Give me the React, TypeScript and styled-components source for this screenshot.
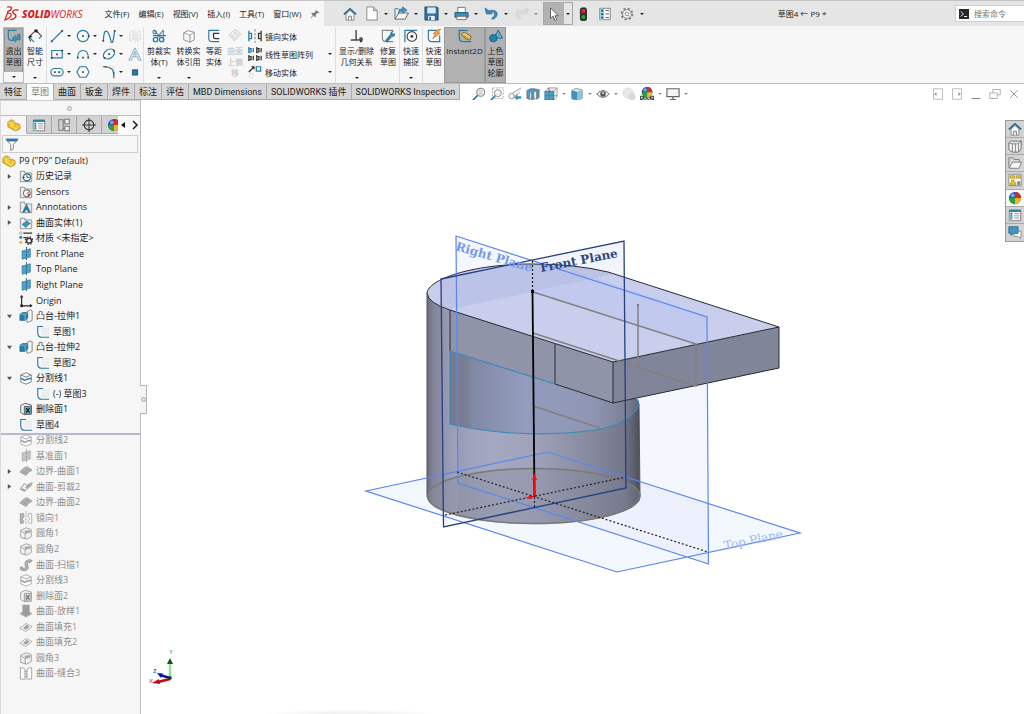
import React from 'react';
import styled, { createGlobalStyle, css } from 'styled-components';

const GlobalStyle = createGlobalStyle`
  *, *::before, *::after { box-sizing: border-box; }
  html, body { margin: 0; padding: 0; }
  body {
    font-family: "Open Sans", "Noto Sans", "Noto Sans CJK SC", sans-serif;
    color: #222;
    background: #fff;
  }
  button, input {
    font: inherit;
    color: inherit;
    border: 0;
    padding: 0;
    margin: 0;
    background: none;
    border-radius: 0;
  }
  ul { list-style: none; margin: 0; padding: 0; }
`;

const blue = '#2b7ca3';
const sky = '#5cb0d4';
const ink = '#3a3a3a';

/* ---------- icons, each drawn on a 16 x 16 grid ---------- */

const cube = (line: string, front: string, top: string) => (
  <>
    <path d="M2 4.5 7 2l7 2v8.5L9 15l-7-2.5z" fill={front} stroke={line} />
    <path d="M2 4.5 9 6.8 14 4 7 2z" fill={top} stroke={line} strokeWidth=".8" />
    <path d="M9 6.8V15" stroke={line} />
  </>
);

const folder = (
  <path d="M1.5 2.5h5v2h8v10h-13z" fill="#ececec" stroke="#8a8a8a" />
);

const split = (line: string, wave: string) => (
  <>
    <path d="M2 4.5 8 2l6 2.5v8L8 15l-6-2.5zM2 4.5 8 7l6-2.5" fill="#fafafa" stroke={line} />
    <path d="M2 9c2-1.5 3 2 5 1.5S11 7.5 14 9" stroke={wave} strokeWidth="1.6" />
  </>
);

const plane = (line: string, fill: string) => (
  <>
    <path d="M3.5 4.5 13 2v9.500L3.500 14z" fill={fill} stroke={line} strokeWidth=".6" />
    <path d="M8.5 0v16" stroke={line} strokeDasharray="3 1" />
  </>
);

const sketch = (
  <>
    <path d="M6 4h9M6 7h9M6 10h9M8 2v10M11 2v10M14 2v10" stroke="#e0e3e8" strokeWidth=".7" />
    <path d="M8 1.7H2v7.300q0 5 5 5h8" stroke={blue} strokeWidth="1.3" />
  </>
);

const fillet = (
  <>
    <path d="M2 5 8 2l6 2v8l-5 3-7-2z" fill="#f2f2f2" stroke="#9b9b9b" />
    <path d="M6 5.5 13 4.500v3L7 9q0-2-1-3.500z" fill="#a9a9a9" />
    <path d="M2 5l5 4v6" stroke="#9b9b9b" />
  </>
);

const patch = (
  <>
    <path d="M1 9q4-5 8-6l6 4q-5 2-7 6z" fill="#b4b4b4" stroke="#9a9a9a" />
    <path d="M4 8l5 3M7 5.5l5 3M10.5 4.500 5 11" stroke="#8d8d8d" strokeWidth=".7" />
  </>
);

const surfaceFill = (
  <>
    <path d="M1 9.5 8 4l7 3.500L8 13z" fill="#fafafa" stroke="#a5a5a5" />
    <path d="M4.5 9 9 5.500l3 2.500-4 3z" fill="#a0a0a0" />
  </>
);

const deleteFace = (line: string, fill: string, cross: string) => (
  <>
    <path d="M2 4 7 1.5l7 2V13l-8 1.500L2 12z" fill="#f6f6f6" stroke={line} />
    <path d="M6 5h8v9H6z" fill={fill} stroke={line} />
    <path d="M8 7l4 5M12 7l-4 5" stroke={cross} strokeWidth="1.6" />
  </>
);

const extrude = (
  <>
    <path d="M9 3l4-2 2 1v11l-4 2H9z" fill="#f4f4f4" stroke="#777" />
    <path d="M1 6l3-2h6v6l-3 3H1z" fill={blue} stroke="#1d5f80" strokeWidth=".7" />
    <path d="M1 6h6v7M7 6l3-2" stroke="#8fd0ea" strokeWidth=".8" />
  </>
);

const sphere = (
  <>
    <circle cx="8" cy="8" r="7" fill="#2656b5" />
    <path d="M8 1a7 7 0 0 1 7 7H8z" fill="#d42a22" />
    <path d="M15 8a7 7 0 0 1-7 7V8z" fill="#f0b52c" />
    <path d="M8 15a7 7 0 0 1-7-7h7z" fill="#2ca13c" />
    <circle cx="5.5" cy="5" r="2.2" fill="#9ec6f5" opacity=".7" />
  </>
);

const home = (
  <>
    <path d="M3.5 8v7h9V8L8 4z" fill="#fff" stroke="#777" />
    <path d="M6.5 15v-4.500h3V15" fill="#fff" stroke="#666" />
    <path d="M1 8.5 8 2l7 6.500" stroke="#1f6a91" strokeWidth="1.8" />
  </>
);

const part = (
  <>
    <path d="M1 4.5 5 2l4 2v3l3-1 3 2v4l-5 3-9-5z" fill="#f0c02c" stroke="#a97d10" strokeWidth=".8" />
    <path d="M1 4.5 5 6.500l4-2.500M5 6.500v3l5 3 5-3.500M5 9.500l4-2.500M10 12v3" stroke="#fbe58a" strokeWidth=".9" />
  </>
);

const listIcon = (
  <>
    <path d="M1.5 2.500h13v12h-13z" fill="#fff" stroke="#777" />
    <path d="M1.5 2h13v2.500h-13z" fill={blue} />
    <path d="M2 5h3.500v9H2z" fill="#a8d3e6" />
    <path d="M3 6.500h1.500M3 9h1.500M3 11.500h1.500" stroke="#1d5f80" strokeWidth="1.4" />
    <path d="M7 6.500h6M7 9h6M7 11.500h6" stroke="#888" />
  </>
);

const icons: Record<string, React.ReactNode> = {
  home,
  part,
  sphere,
  list: listIcon,
  plane: plane('#1e5d7c', '#4fa3c8'),
  planeOff: plane('#9a9a9a', '#c4c4c4'),
  sketch,
  split: split('#777', blue),
  splitOff: split('#aaa', '#999'),
  fillet,
  patch,
  trimSurface: (
    <>
      <path d="M1 10q3-2 5-6l3 2 6-3q0 4-4 6l-5 4z" fill="#ededed" stroke="#999" />
      <path d="M3 10l4 2M8 9l5-4" stroke="#8d8d8d" strokeWidth="1.5" />
    </>
  ),
  surfaceFill,
  deleteFace: deleteFace('#555', sky, '#222'),
  deleteFaceOff: deleteFace('#999', '#d0d0d0', '#7d7d7d'),
  extrude,
  history: (
    <>
      {folder}
      <circle cx="9" cy="9.5" r="4" fill="#fff" stroke="#1f6a91" strokeWidth="1.3" />
      <path d="M9 7v2.500h2.500M3.500 9.500l1.500 1.500 1.500-1.500" stroke={ink} />
    </>
  ),
  sensors: (
    <>
      {folder}
      <circle cx="9" cy="9.5" r="4" fill="#fff" stroke="#555" strokeWidth="1.1" />
      <path d="M9 10l2.500-2.500" stroke="#333" />
      <path d="M10 10h2.500v2.500H10z" fill="#d6302a" />
    </>
  ),
  annotations: (
    <>
      {folder}
      <path d="M4 14 8.500 4.500 13 14h-2.500l-.8-2.500H7.200L6.500 14z" fill={blue} stroke="#1d5f80" strokeWidth=".5" />
    </>
  ),
  solids: (
    <>
      {folder}
      <path d="M3.500 9.500q3-1 5-4l4.500 3q-3 1-5 4.500z" fill="#3e97bf" stroke="#1d5f80" strokeWidth=".7" />
    </>
  ),
  material: (
    <>
      <circle cx="2" cy="2.5" r="1.5" fill="#fff" stroke="#777" strokeWidth=".7" />
      <circle cx="2" cy="7.5" r="1.7" fill={blue} />
      <circle cx="2" cy="13" r="1.7" fill="#efb31f" />
      <path d="M5 2.500h10M5 7.500h4" stroke="#333" strokeWidth="1.5" />
      <circle cx="11.5" cy="11" r="2.8" stroke="#333" strokeWidth="1.6" />
      <circle cx="11.5" cy="11" r="4.3" stroke="#333" strokeWidth="1.3" strokeDasharray="1.7 1.7" />
    </>
  ),
  origin: (
    <>
      <path d="M3 2v11.500h11" stroke="#222" strokeWidth="1.3" />
      <path d="M1 4l2-3 2 3M12.500 11l3 2.500-3 2" fill="#222" />
      <path d="M1.500 12h3v3h-3z" fill="#222" />
    </>
  ),
  mirrorOff: (
    <>
      <path d="M1.500 3h4v4l-2 2 2 3-1 2h-3z" fill="#b8b8b8" stroke="#999" />
      <path d="M14.500 3h-4v4l2 2-2 3 1 2h3z" fill="#fff" stroke="#aaa" />
      <path d="M8 0v16" stroke="#aaa" strokeDasharray="3 1" />
    </>
  ),
  sweep: (
    <path d="M1 11q4-2 3.500 1Q9 12 7 8q-1-6 6-6l2 1-2 2q-5 0-3 3 2 6-4 6.500l-4-1z" fill="#b4b4b4" stroke="#8f8f8f" />
  ),
  loft: <path d="M4 1h8v8l3 2-7 4-7-4 3-2z" fill="#9d9d9d" stroke="#bbb" />,
  knit: (
    <>
      <path d="M1.500 2h3l2.500 2v11H1.500zM14.500 2h-3L9 4v11h5.500z" fill="#fafafa" stroke="#a0a0a0" />
      <path d="M6 6h1.500M6 9h1.500M6 12h1.500M8.500 6H10M8.500 9H10M8.500 12H10" stroke="#999" />
    </>
  ),
  funnel: (
    <>
      <path d="M1 2.500h14l-5.500 6v5l-3 2v-7z" fill="#fff" stroke="#777" />
      <path d="M1 2h14l-1.500 3h-11z" fill={blue} />
    </>
  ),
  config: (
    <>
      <path d="M2 2h5v12H2M7 4h3M7 12h3" stroke="#777" strokeWidth="1.2" />
      <path d="M9 1.500h5v5H9zM9 9.500h5v5H9z" fill="#f4f4f4" stroke="#777" strokeWidth="1.2" />
      <path d="M2 2v12" stroke="#777" />
    </>
  ),
  target: (
    <>
      <circle cx="8" cy="8" r="5.5" stroke="#333" strokeWidth="1.3" />
      <path d="M8 0v16M0 8h16" stroke="#333" strokeWidth="1.1" />
    </>
  ),
  pin: (
    <path d="M9 1l6 5-1.500.8-2-.3L9 9.500l.5 2.500-1.500 1-2.500-2.500L1.500 15 1 14.500 4.500 9.500 2 7.500 3 6l3 .3L9 4z" fill="#777" />
  ),
  page: <path d="M3 1h7l4 4v10H3zM10 1v4h4" fill="#fdfdfd" stroke="#888" />,
  open: (
    <>
      <path d="M1 14V3h4l1.500 1.500H10V7" fill="#e8f1f5" stroke="#666" />
      <path d="M1 14 5 7.500h10.500L12 14z" fill="#f2f2f2" stroke="#666" />
      <path d="M4.500 8Q5 3 9 3V.8L14 4.500 9 7.500V5.500Q6.500 5.500 4.500 8z" fill="#3c93bb" stroke="#1f6a91" strokeWidth=".6" />
    </>
  ),
  save: (
    <>
      <path d="M1 1h13l1 1v13H1z" fill="#2e7399" stroke="#1d4f6c" />
      <path d="M3.500 1.500h9V8h-9z" fill="#dbe8ef" />
      <path d="M4.500 10.500h7V15h-7z" fill="#eee" />
      <path d="M5.500 11.500h2V15h-2z" fill="#2e7399" />
    </>
  ),
  print: (
    <>
      <path d="M4 1.500h8V7H4z" fill="#fff" stroke="#777" />
      <path d="M1 7h14v5H1z" fill="#3b8fb6" stroke="#1d5f80" />
      <path d="M3 11h10v3.500H3z" fill="#f5f5f5" stroke="#777" />
    </>
  ),
  undo: <path d="M1 2l1.500 6.500L9 8.500 7 6.700q4-1 4.300 1.800T8 13l1.500 1.500Q15 11.500 14 7.500T5 4.800z" fill="#3b88b2" stroke="#26668b" strokeWidth=".6" />,
  redo: <path d="M15 2l-1.500 6.500L7 8.500l2-1.800q-4-1-4.300 1.800T8 13l-1.500 1.500Q1 11.500 2 7.500T11 4.800z" fill="#dcdcdc" stroke="#c6c6c6" strokeWidth=".6" />,
  cursor: <path d="M4 1v12l3-2.500 2 5 2-1-2-4.500h4z" fill="#fff" stroke="#555" />,
  traffic: (
    <>
      <rect x="5" y="1" width="7" height="14.5" rx="2" fill="#333" stroke="#222" />
      <circle cx="8.5" cy="4.5" r="2.3" fill="#d9302a" />
      <circle cx="8.5" cy="11.5" r="2.3" fill="#2c9a45" />
    </>
  ),
  options: (
    <>
      <path d="M2 1.500h12v13H2z" fill="#fff" stroke="#777" />
      <path d="M2.500 2H7v12.500H2.500z" fill="#9fcbe0" />
      <path d="M3.500 4h2.500M3.500 8h2.500M3.500 12h2.500" stroke="#1f5f83" strokeWidth="2" />
      <path d="M8.500 4h4M8.500 8h4M8.500 12h4" stroke="#666" strokeWidth="1.3" />
    </>
  ),
  gear: (
    <>
      <circle cx="8" cy="8" r="6.3" stroke="#808080" strokeWidth="2" strokeDasharray="2.5 2.45" />
      <circle cx="8" cy="8" r="5" fill="#f2f2f2" stroke="#808080" />
      <circle cx="8" cy="8" r="2" fill="#fff" stroke="#808080" />
    </>
  ),
  command: (
    <>
      <path d="M0 0h16v16H0z" fill="#262626" />
      <path d="M3 4l4 4-4 4M8 12h5" stroke="#fff" strokeWidth="1.5" />
    </>
  ),
  exitSketch: (
    <>
      <path d="M11 1.500H1.500V9q0 4 4 4H7" stroke={blue} strokeWidth="1.3" />
      <path d="M12 6v3.500h-2V7L5.500 11l4.500 4v-2.500h5V6z" fill="#3f92b8" stroke="#24698c" strokeWidth=".6" />
    </>
  ),
  dimension: (
    <>
      <path d="M1 9 9 1.500M9 1.500l6.500 6.500M1 9l2 5.500" stroke={ink} strokeWidth="1.2" />
      <path d="M15.500 8l-3 3M1 9l6 6" stroke={blue} strokeWidth="1.4" />
      <path d="M7 .5h4v3.500L8.500 4zM0 10l3-3.500 2 3z" fill="#222" />
    </>
  ),
  line: (
    <>
      <path d="M2 14 14 2" stroke={blue} strokeWidth="1.3" />
      <path d="M1 13h2v2H1zM13 1h2v2h-2z" fill="#444" />
    </>
  ),
  circle: (
    <>
      <circle cx="8" cy="8" r="6.5" stroke={blue} strokeWidth="1.3" />
      <path d="M7 7h2v2H7zM13.500 7h2v2h-2z" fill="#444" />
    </>
  ),
  spline: (
    <>
      <path d="M1.500 14Q2 1.500 5 2.500T10 13t4.500-11.500" stroke={blue} strokeWidth="1.4" />
      <path d="M.5 12.500h2v2h-2zM13.500 1h2v2h-2z" fill="#444" />
    </>
  ),
  mirrorGhost: <path d="M2 4l4-2v10l-4 2zM10 4l4-2v10l-4 2zM8 1v14M1 7h14M1 11h14" stroke="#dedede" />,
  rect: (
    <>
      <path d="M2 4h12v8.500H2z" stroke={blue} strokeWidth="1.3" />
      <path d="M1 11.500h2v2H1zM13 3h2v2h-2zM7 7.500h2v2H7z" fill="#444" />
    </>
  ),
  arc: (
    <>
      <path d="M2 12q0-8 6-8t6 8" stroke={blue} strokeWidth="1.3" />
      <path d="M1 11h2v2H1zM13 11h2v2h-2zM7 11h2v2H7z" fill="#444" />
    </>
  ),
  ellipse: (
    <>
      <ellipse cx="8" cy="8" rx="7" ry="5" transform="rotate(-35 8 8)" stroke={blue} strokeWidth="1.3" />
      <path d="M7 7h2v2H7zM12.500 3h2v2h-2zM2 11.500h2v2H2z" fill="#444" />
    </>
  ),
  letter: <path d="M1 15 8 1l7 14h-3l-1.500-4h-5L4 15zM6.300 9h3.400L8 5z" fill="#eaf2f6" stroke="#7ca9bf" />,
  slot: (
    <>
      <rect x="1" y="4" width="14" height="8.5" rx="4.2" stroke={blue} strokeWidth="1.3" />
      <path d="M4.500 7.200h2v2h-2zM9.500 7.200h2v2h-2z" fill="#444" />
    </>
  ),
  polygon: (
    <>
      <path d="M1 8 4.500 2h7L15 8l-3.500 6h-7z" stroke={blue} strokeWidth="1.3" />
      <path d="M7 7h2v2H7z" fill="#444" />
    </>
  ),
  corner: (
    <>
      <path d="M2 2q12 0 11.500 9" stroke={blue} strokeWidth="1.3" />
      <path d="M1 2h5M13.500 8v7" stroke="#555" strokeWidth="1.3" />
      <path d="M7 2h7v6" stroke="#bbb" strokeDasharray="1 1.5" />
    </>
  ),
  point: <path d="M5 5.500h6v6H5z" fill={blue} stroke="#1d4f6c" />,
  trim: (
    <>
      <path d="M2 1l8 9M13 1 6 10M13 1v14" stroke="#6f97ab" strokeWidth="1.5" />
      <circle cx="4" cy="12" r="2.5" stroke={blue} strokeWidth="1.5" />
      <circle cx="11" cy="12" r="2.5" stroke={blue} strokeWidth="1.5" />
      <path d="M1 7.500h15" stroke={blue} strokeWidth="1.3" />
      <circle cx="3" cy="3.5" r="2" stroke={blue} strokeWidth="1.2" />
    </>
  ),
  convert: cube('#8a8a8a', '#f6f6f6', '#fff'),
  offset: (
    <>
      <path d="M14 1.500H2v9q0 4 4 4h8" stroke={blue} strokeWidth="1.3" />
      <path d="M14 5H7.500v4q0 2 2 2H14" stroke="#333" strokeWidth="1.4" />
    </>
  ),
  offsetSurface: (
    <path d="M1 8Q5 1 9 1l6 5q-4 1-5 5l-3 3-1-3zM4 7l5 4M7 4l5 3" fill="#efefef" stroke="#cbcbcb" />
  ),
  mirror: (
    <>
      <path d="M1 2v12M1 5h3v6H1" stroke={blue} strokeWidth="1.5" />
      <path d="M15 2v12M15 5h-3v6h3" stroke={ink} strokeWidth="1.5" />
      <path d="M8 0v16" stroke="#777" strokeDasharray="3 1.5" />
    </>
  ),
  pattern: (
    <>
      <path d="M1 0v7M1 2h2.500v3.500H1M6 1v5" stroke={blue} strokeWidth="1.5" />
      <path d="M10 0v7M10 2h2.500v3.500H10M15 1v5M1 9v7M1 11h2.500v3.500H1M6 10v5M10 9v7M10 11h2.500v3.500H10M15 10v5" stroke={ink} strokeWidth="1.5" />
    </>
  ),
  move: (
    <>
      <path d="M9.500 2h5v5h-5z" stroke={blue} strokeWidth="1.4" />
      <path d="M1.500 10h4.500v4.500H1.500z" stroke="#ddd" />
      <path d="M1 8 6 3" stroke="#222" strokeWidth="1.4" />
      <path d="M3.500 1.500h4v4z" fill="#222" />
    </>
  ),
  relations: (
    <>
      <path d="M7 1v11M1 12.500h9" stroke="#444" strokeWidth="1.6" />
      <path d="M10 11.500h5L13.500 15h-2z" fill="#333" />
      <circle cx="12.5" cy="11" r="2" fill="#555" />
    </>
  ),
  repair: (
    <>
      <path d="M14 1.500H1.500V10q0 4.500 4.500 4.500h8" stroke="#888" strokeWidth="1.3" />
      <path d="M5 13 11 6q-.5-3 3-3.500l-1.500 2L14 6l2-1q0 4-3.500 3.500L7 15z" fill="#2f86b0" stroke="#1d5f80" strokeWidth=".6" />
    </>
  ),
  snap: (
    <>
      <path d="M1 1v14M1 1.500h14" stroke={blue} strokeWidth="1.4" />
      <circle cx="9" cy="8.5" r="5.5" stroke="#444" strokeWidth="1.3" />
      <circle cx="9" cy="8.5" r="1.6" fill="#333" />
    </>
  ),
  rapid: (
    <>
      <path d="M11 1.500H1.500V10q0 4.500 4.500 4.500h8.500V7" stroke={blue} strokeWidth="1.3" />
      <path d="M13 0 7 5.500h3L6.500 11 15 4.500h-3L16 0z" fill="#f4b429" stroke="#c5531b" strokeWidth=".7" />
    </>
  ),
  instant: (
    <>
      <path d="M11 1.500H1.500V10q0 4.500 4.500 4.500H15" stroke={blue} strokeWidth="1.5" />
      <path d="M4 5.500 7 3.500l8 5-1 4-4-.5-5-4z" fill="#f2cf45" stroke="#555" strokeWidth=".9" />
      <path d="M6 7.500l6 3.500" stroke="#777" />
    </>
  ),
  shaded: (
    <>
      <path d="M10.500 1l5 9.500h-10z" fill="#5fa9c9" stroke="#22658a" />
      <circle cx="5" cy="10.5" r="4.3" fill="#2e7fa8" stroke="#1d5f80" />
    </>
  ),
  zoomFit: (
    <>
      <circle cx="10" cy="6" r="4.5" fill="#e8f2f7" stroke="#888" strokeWidth="1.2" />
      <path d="M6.500 9.500 1 15" stroke={blue} strokeWidth="2" />
      <path d="M8 4.500h4M8 7.500h4" stroke="#aaa" />
    </>
  ),
  zoomArea: (
    <>
      <path d="M3 1h12v12H3z" stroke="#999" strokeDasharray="2 1.5" />
      <circle cx="9" cy="7" r="4" fill="#eef5f8" stroke="#888" />
      <path d="M6 10 1 15" stroke={blue} strokeWidth="2" />
    </>
  ),
  previous: (
    <>
      <path d="M15 1 3 8l2 4 8-5" fill="#eee" stroke="#999" />
      <circle cx="4" cy="10.5" r="3" fill="#fff" stroke="#888" />
      <path d="M7 12l4-3.500v2h4v3h-4v2z" fill="#3f92b8" />
    </>
  ),
  section: (
    <>
      <path d="M1 4l4-2h4l6 1v9l-3 2V5H9v9H5V6l-1 8-3-1z" fill="#4b9cc1" stroke="#666" strokeWidth=".8" />
      <path d="M9 5h3v8l-3 1zM4 6h2v8H4z" fill="#f4f4f4" stroke="#777" strokeWidth=".8" />
    </>
  ),
  orient: (
    <>
      <path d="M5 1h10v10l-4 4V5H5z" fill="#eee" stroke="#888" strokeWidth=".8" />
      <path d="M1 5h10v10H1z" fill="#4ba0c6" stroke="#24698c" strokeWidth=".8" />
      <path d="M1 5l4-4M11 5l4-4M6 1v14M1 10h14" stroke="#6b6b6b" strokeWidth=".7" />
    </>
  ),
  display: (
    <>
      <path d="M2 4 7 1.500l7 2V13l-5 2.500-7-2z" fill="#dfeaf0" stroke="#777" strokeWidth=".8" />
      <path d="M2 4l6 1.500v9.500l-6-1.500z" fill="#3f92b8" />
      <path d="M8 5.500 14 3.500V13l-6 2z" fill="#8cc3dc" />
    </>
  ),
  eye: (
    <>
      <path d="M1 8q7-8 14 0-7 8-14 0z" fill="#fafafa" stroke="#777" strokeWidth="1.2" />
      <circle cx="8" cy="8" r="3.2" fill="#555" />
      <circle cx="8" cy="7" r="1" fill="#fff" />
    </>
  ),
  appearance: (
    <>
      <circle cx="7" cy="7" r="6" fill="#e8e8e8" stroke="#ddd" />
      <circle cx="11.5" cy="11" r="3.5" fill="#dadada" stroke="#d0d0d0" />
    </>
  ),
  scene: (
    <>
      <path d="M0 10h16v6H0z" fill="#444" />
      <path d="M1 11h2v2H1zM5 12h2v2H5zM9 12h2v2H9zM13 11h2v2h-2zM3 14h2v1.500H3zM7 14h2v1.500H7zM11 14h2v1.500h-2z" fill="#ddd" />
      <g transform="translate(1 -1) scale(.88)">{sphere}</g>
    </>
  ),
  monitor: (
    <>
      <path d="M1 2h14v9H1z" fill="#f0f5f7" stroke="#666" strokeWidth="1.3" />
      <path d="M8 11v3M4.500 14.500h7" stroke="#666" strokeWidth="1.4" />
    </>
  ),
  dockLeft: (
    <>
      <path d="M2 1h12v14H2z" fill="#fff" stroke="#aaa" />
      <path d="M6 5.500v5L3 8z" fill="#888" />
    </>
  ),
  dockRight: (
    <>
      <path d="M2 1h12v14H2z" fill="#fff" stroke="#aaa" />
      <path d="M10 5.500v5L13 8z" fill="#888" />
    </>
  ),
  minimize: <path d="M2 14h12" stroke="#888" strokeWidth="1.5" />,
  restore: (
    <>
      <path d="M5 6V2h10v7h-4" stroke="#999" />
      <path d="M1 6.500h10v7.500H1z" fill="#fff" stroke="#999" />
    </>
  ),
  close: <path d="M3 3l10 10M13 3 3 13" stroke="#888" strokeWidth="1.2" />,
  library: (
    <>
      <path d="M1 4.500 4 2l3 1 2-1 3 1 3-1v9l-3 4H5l-4-3z" fill="#f0f0f0" stroke="#666" />
      <path d="M5 5v10M8.500 5v10M12 5v10M1 4.500l4 1h7l3-3" stroke="#777" strokeWidth=".9" />
    </>
  ),
  explorer: (
    <>
      <path d="M1 13.500V2h4.500L7 4h6v3" fill="#d9d9d9" stroke="#777" />
      <path d="M1.500 14 5 7h10.500l-3 7z" fill="#f7f7f7" stroke="#777" />
    </>
  ),
  palette: (
    <>
      <path d="M1 1.500h14v13H1z" fill="#fff" stroke="#888" />
      <path d="M2.500 3h5.500v3H2.500zM9.500 3H14v3H9.500zM4 8h3v3h2v3H2.500v-3H4z" fill="#edc52a" stroke="#8e7411" strokeWidth=".6" />
      <path d="M10.500 9.500H14V14h-3.500z" fill="#888" />
    </>
  ),
  forum: (
    <>
      <path d="M7 7h8v6h-1v2.500L11.500 13H7z" fill="#fff" stroke="#888" />
      <path d="M1 2h10.500v7.500H6L3.500 12V9.500H1z" fill="#4498bf" stroke="#24698c" />
    </>
  ),
};

const Glyph = styled.svg<{ $size: number }>`
  display: block;
  flex: none;
  width: ${(p) => p.$size}px;
  height: ${(p) => p.$size}px;
`;

const Icon = ({ name, size = 14 }: { name: string; size?: number }) => (
  <Glyph $size={size} viewBox="0 0 16 16" fill="none" aria-hidden="true">
    {icons[name]}
  </Glyph>
);

const Caret = styled.span<{ $soft?: boolean }>`
  display: block;
  flex: none;
  border: 2px solid transparent;
  border-top-color: ${(p) => (p.$soft ? '#8f8f8f' : '#222')};
  border-bottom-width: 0;
`;

/* ---------- title bar ---------- */

const Window = styled.div`
  display: flex;
  flex-direction: column;
  min-height: 100vh;
  font-size: 9px;
  line-height: 12px;
`;

const TitleBar = styled.header`
  display: flex;
  height: 26px;
  background: #e5e5e5;
  border-top: 1px solid #c4c4c4;
  font-size: 8px;
`;

const Brand = styled.div`
  display: flex;
  align-items: center;
  width: 324px;
  padding-left: 4px;
  background: #f7f7f7;
`;

const Logo = styled.svg`
  width: 15px;
  height: 16px;
  margin-right: 3px;
`;

const Wordmark = styled.span<{ $bold?: boolean }>`
  font-size: 10px;
  font-style: italic;
  font-weight: ${(p) => (p.$bold ? 800 : 400)};
  color: #d8261c;
`;

const MenuBar = styled.nav`
  display: flex;
  align-items: center;
  gap: 9px;
  margin: 0 9px 0 22px;
`;

const MenuButton = styled.button`
  white-space: nowrap;
`;

const QuickBar = styled.div`
  display: flex;
  align-items: center;
  padding-left: 18px;
`;

const ToolButton = styled.button`
  display: flex;
  align-items: center;
  justify-content: center;
  flex: none;
  width: 16px;
  height: 16px;
`;

const DropButton = styled.button<{ $width: number }>`
  display: flex;
  align-items: center;
  justify-content: center;
  flex: none;
  width: ${(p) => p.$width}px;
  height: 16px;
`;

const QuickHome = styled(ToolButton)`
  margin-right: 5px;
`;

const SelectTool = styled.div`
  display: flex;
  align-items: center;
  height: 23px;
  margin-right: 2px;
  border: 1px solid #a8a8a8;
`;

const SelectButton = styled(ToolButton)`
  width: 20px;
  height: 21px;
  background: #b2b2b2;
`;

const QuickGroup = styled.div`
  display: flex;
  align-items: center;
  gap: 6px;
`;

const DocumentTitle = styled.div`
  display: flex;
  align-items: center;
  justify-content: center;
  flex: 1;
  white-space: nowrap;
  color: #222;
`;

const SearchBox = styled.label`
  display: flex;
  align-items: center;
  align-self: center;
  gap: 5px;
  width: 69px;
  height: 17px;
  padding-left: 3px;
  background: #fff;
  border: 1px solid #cfcfcf;
  border-right: 0;
`;

const SearchInput = styled.input`
  flex: 1;
  min-width: 0;
  outline: none;
  &::placeholder { color: #777; opacity: 1; }
`;

/* ---------- ribbon ---------- */

const Ribbon = styled.div`
  display: flex;
  height: 58px;
  padding: 1px 0 0 3px;
  background: #f7f7f7;
  border-bottom: 1px solid #bdbdbd;
  font-size: 8px;
  line-height: 11px;
`;

const RibbonButton = styled.button<{ $width: number; $active?: boolean; $disabled?: boolean; $rule?: boolean }>`
  display: flex;
  flex-direction: column;
  align-items: center;
  flex: none;
  width: ${(p) => p.$width}px;
  padding-top: 2px;
  white-space: pre;
  color: ${(p) => (p.$disabled ? '#bcbcbc' : '#222')};
  ${(p) => p.$active && css`background: #b1b1b1; box-shadow: inset 0 0 0 1px #999;`}
  ${(p) => p.$rule && css`border-right: 1px solid #dedede;`}
`;

const RibbonLabel = styled.span`
  margin-top: 2px;
`;

const RibbonDrop = styled.span`
  display: flex;
  align-items: center;
  justify-content: center;
  width: 100%;
  height: 10px;
  margin-top: auto;
`;

const ExitSketch = styled(RibbonButton)`
  border: 1px solid #bdbdbd;
  padding-top: 1px;
  ${RibbonDrop} { background: #f7f7f7; }
`;

const SketchGrid = styled.div`
  display: grid;
  grid-template-columns: repeat(3, 26px) 16px;
  grid-template-rows: repeat(3, 18px);
  padding-left: 2px;
  border-right: 1px solid #dedede;
`;

const SketchCell = styled.div`
  display: flex;
  align-items: center;
`;

const CommandStack = styled.div`
  display: grid;
  grid-template-rows: repeat(3, 18px);
  width: 91px;
  padding-right: 3px;
  border-right: 1px solid #dedede;
`;

const StackRow = styled.button`
  display: flex;
  align-items: center;
  gap: 3px;
  padding-left: 3px;
  text-align: left;
  white-space: nowrap;
  ${Caret} { margin-left: auto; }
`;

/* ---------- tabs and view toolbar ---------- */

const TabRow = styled.div`
  display: flex;
  height: 16px;
  background: #fff;
`;

const CommandTabs = styled.div`
  display: flex;
  font-family: Roboto, "Noto Sans CJK SC", sans-serif;
`;

const CommandTab = styled.button<{ $active?: boolean; $wide?: boolean }>`
  min-width: 27px;
  padding: 0 ${(p) => (p.$wide ? 4 : 0)}px;
  white-space: nowrap;
  background: #d5d5d5;
  border-right: 1px solid #aaa;
  border-bottom: 1px solid #aaa;
  ${(p) => p.$active && css`background: #fbfbfb; color: #7b7b7b; border-bottom-color: #fbfbfb;`}
`;

const ViewBar = styled.div`
  display: flex;
  align-items: center;
  padding: 4px 0 0 11px;
  gap: 2px;
`;

const WindowBar = styled.div`
  display: flex;
  align-items: center;
  gap: 3px;
  margin-left: auto;
  padding: 4px 2px 0 0;
`;

/* ---------- feature manager ---------- */

const Workspace = styled.main`
  display: flex;
  flex: 1;
`;

const Sidebar = styled.aside`
  position: relative;
  z-index: 1;
  display: flex;
  flex-direction: column;
  flex: none;
  width: 141px;
  background: #f6f6f6;
  border-right: 1px solid #bdbdbd;
  border-left: 1px solid #dcdcdc;
`;

const GripBar = styled.div`
  display: flex;
  align-items: center;
  justify-content: center;
  height: 16px;
  padding-right: 3px;
  border-top: 1px solid #d0d0d0;
  border-bottom: 1px solid #bdbdbd;
`;

const Knob = styled.span`
  width: 5px;
  height: 5px;
  border: 1px solid #aaa;
  border-radius: 50%;
  background: #e8e8e8;
`;

const PanelTabs = styled.div`
  display: flex;
  height: 18px;
  margin: 0 0 1px 1px;
`;

const PanelTab = styled.button<{ $active?: boolean; $cut?: boolean }>`
  display: flex;
  align-items: center;
  justify-content: center;
  width: 25px;
  background: ${(p) => (p.$active ? '#f6f6f6' : '#d2d2d2')};
  border-right: 1px solid #a9a9a9;
  border-bottom: 1px solid ${(p) => (p.$active ? '#f6f6f6' : '#a9a9a9')};
  ${(p) => p.$cut && css`
    justify-content: flex-start;
    width: 16px;
    padding-left: 5px;
    border-right: 0;
    overflow: hidden;
  `}
`;

const PanelArrow = styled.button<{ $grow?: boolean }>`
  display: flex;
  align-items: center;
  justify-content: ${(p) => (p.$grow ? 'flex-end' : 'center')};
  ${(p) => (p.$grow ? css`flex: 1;` : css`width: 10px; background: #fbfbfb;`)}
`;

const ArrowGlyph = styled.svg<{ $size: number }>`
  display: block;
  width: ${(p) => p.$size}px;
  height: ${(p) => p.$size}px;
`;

const FilterBox = styled.label`
  display: flex;
  align-items: center;
  height: 18px;
  margin: 0 2px 0 1px;
  padding-left: 2px;
  border: 1px solid #cdcdcd;
`;

const FilterInput = styled.input`
  flex: 1;
  min-width: 0;
  outline: none;
`;

const Tree = styled.ul`
  display: grid;
  grid-auto-rows: 1fr;
  min-height: 528px;
`;

const TreeRow = styled.li<{ $level: number; $off?: boolean; $bar?: boolean }>`
  display: flex;
  align-items: center;
  gap: 3px;
  padding-left: ${(p) => [1, 2, 35][p.$level]}px;
  white-space: nowrap;
  color: ${(p) => (p.$off ? '#8d8d8d' : '#222')};
  ${(p) => p.$bar && css`box-shadow: 0 2px 0 #b6b6d6;`}
`;

const Twisty = styled.button`
  display: flex;
  align-items: center;
  justify-content: center;
  width: 13px;
  height: 12px;
`;

const Handle = styled.button`
  position: absolute;
  top: 285px;
  right: -7px;
  display: flex;
  align-items: center;
  justify-content: center;
  width: 7px;
  height: 29px;
  background: #f4f4f4;
  border: 1px solid #b5b5b5;
  border-left: 0;
`;

/* ---------- graphics area ---------- */

const Viewport = styled.section`
  position: relative;
  flex: 1;
  min-width: 0;
  background: #fff;
`;

const Scene = styled.svg`
  display: block;
  width: 100%;
  height: auto;
`;

const PlaneName = styled.text<{ $light?: boolean }>`
  font-family: "DejaVu Serif", serif;
  font-size: 12px;
  font-weight: ${(p) => (p.$light ? 400 : 700)};
`;

const AxisName = styled.text`
  font-family: "Liberation Sans", sans-serif;
  font-size: 6px;
  font-weight: 700;
`;

const TaskPane = styled.nav`
  position: absolute;
  top: 20px;
  right: 0;
  display: grid;
  grid-auto-rows: 1fr;
  width: 19px;
  min-height: 122px;
  background: #d3d3d3;
  border: 1px solid #999;
  border-right: 0;
`;

const TaskButton = styled.button<{ $active?: boolean }>`
  display: flex;
  align-items: center;
  justify-content: center;
  background: ${(p) => (p.$active ? '#f8f8f8' : '#d3d3d3')};
  border-bottom: 1px solid #aaa;
  &:last-child { border-bottom: 0; }
`;

/* ---------- data ---------- */

const menus = ['文件(F)', '编辑(E)', '视图(V)', '插入(I)', '工具(T)', '窗口(W)'];

const quickTools = [
  ['page', '新建'],
  ['open', '打开'],
  ['save', '保存'],
  ['print', '打印'],
  ['undo', '撤销'],
  ['redo', '重做'],
];

const sketchTools: [string, boolean][] = [
  ['line', true], ['circle', true], ['spline', true], ['mirrorGhost', false],
  ['rect', true], ['arc', true], ['ellipse', true], ['letter', false],
  ['slot', true], ['polygon', false], ['corner', true], ['point', false],
];

type Command = { icon: string; label: string; width: number; drop?: boolean; active?: boolean; disabled?: boolean; rule?: boolean };

const editCommands: Command[] = [
  { icon: 'trim', label: '剪裁实\n体(T)', width: 30, drop: true },
  { icon: 'convert', label: '转换实\n体引用', width: 29, drop: true },
  { icon: 'offset', label: '等距\n实体', width: 22 },
  { icon: 'offsetSurface', label: '曲面\n上偏\n移', width: 20, disabled: true },
];

const viewCommands: Command[] = [
  { icon: 'relations', label: '显示/删除\n几何关系', width: 41, drop: true },
  { icon: 'repair', label: '修复\n草图', width: 23, rule: true },
  { icon: 'snap', label: '快速\n捕捉', width: 23, drop: true, rule: true },
  { icon: 'rapid', label: '快速\n草图', width: 21 },
  { icon: 'instant', label: 'Instant2D', width: 41, active: true },
  { icon: 'shaded', label: '上色\n草图\n轮廓', width: 21, active: true },
];

const tabs = ['特征', '草图', '曲面', '钣金', '焊件', '标注', '评估', 'MBD Dimensions', 'SOLIDWORKS 插件', 'SOLIDWORKS Inspection'];

const viewTools: [string, boolean][] = [
  ['zoomFit', false], ['zoomArea', false], ['previous', false], ['section', false],
  ['orient', true], ['display', true], ['eye', true], ['appearance', false],
  ['scene', true], ['monitor', true],
];

type Node = { icon: string; text: string; level?: number; fold?: 'open' | 'shut'; off?: boolean; bar?: boolean };

const nodes: Node[] = [
  { icon: 'part', text: 'P9 ("P9" Default)', level: 0 },
  { icon: 'history', text: '历史记录', fold: 'shut' },
  { icon: 'sensors', text: 'Sensors' },
  { icon: 'annotations', text: 'Annotations', fold: 'shut' },
  { icon: 'solids', text: '曲面实体(1)', fold: 'shut' },
  { icon: 'material', text: '材质 <未指定>' },
  { icon: 'plane', text: 'Front Plane' },
  { icon: 'plane', text: 'Top Plane' },
  { icon: 'plane', text: 'Right Plane' },
  { icon: 'origin', text: 'Origin' },
  { icon: 'extrude', text: '凸台-拉伸1', fold: 'open' },
  { icon: 'sketch', text: '草图1', level: 2 },
  { icon: 'extrude', text: '凸台-拉伸2', fold: 'open' },
  { icon: 'sketch', text: '草图2', level: 2 },
  { icon: 'split', text: '分割线1', fold: 'open' },
  { icon: 'sketch', text: '(-) 草图3', level: 2 },
  { icon: 'deleteFace', text: '删除面1' },
  { icon: 'sketch', text: '草图4', bar: true },
  { icon: 'splitOff', text: '分割线2', off: true },
  { icon: 'planeOff', text: '基准面1', off: true },
  { icon: 'patch', text: '边界-曲面1', off: true, fold: 'shut' },
  { icon: 'trimSurface', text: '曲面-剪裁2', off: true, fold: 'shut' },
  { icon: 'patch', text: '边界-曲面2', off: true },
  { icon: 'mirrorOff', text: '镜向1', off: true },
  { icon: 'fillet', text: '圆角1', off: true },
  { icon: 'fillet', text: '圆角2', off: true },
  { icon: 'sweep', text: '曲面-扫描1', off: true },
  { icon: 'splitOff', text: '分割线3', off: true },
  { icon: 'deleteFaceOff', text: '删除面2', off: true },
  { icon: 'loft', text: '曲面-放样1', off: true },
  { icon: 'surfaceFill', text: '曲面填充1', off: true },
  { icon: 'surfaceFill', text: '曲面填充2', off: true },
  { icon: 'fillet', text: '圆角3', off: true },
  { icon: 'knit', text: '曲面-缝合3', off: true },
];

const CommandButton = ({ icon, label, width, drop, active, disabled, rule }: Command) => (
  <RibbonButton $width={width} $active={active} $disabled={disabled} $rule={rule} disabled={disabled}>
    <Icon name={icon} />
    <RibbonLabel>{label}</RibbonLabel>
    {drop && <RibbonDrop><Caret /></RibbonDrop>}
  </RibbonButton>
);

/* ---------- 3D model ---------- */

const topFace = 'M427 293C428 280 470 264 533 264Q575 264 608 272L779 327 613 362 450 310Q428 303 427 293z';

const Model = () => (
  <Scene viewBox="141 100 883 614" role="img" aria-label="P9">
    <defs>
      <linearGradient id="wall" gradientUnits="userSpaceOnUse" x1="427" x2="641" y1="0" y2="0">
        <stop offset="0" stopColor="#696b73" />
        <stop offset=".03" stopColor="#83869a" />
        <stop offset=".12" stopColor="#979bb2" />
        <stop offset=".3" stopColor="#a4a8c1" />
        <stop offset=".5" stopColor="#9fa2b9" />
        <stop offset=".75" stopColor="#878ba0" />
        <stop offset=".92" stopColor="#74778a" />
        <stop offset=".98" stopColor="#555864" />
        <stop offset="1" stopColor="#484a52" />
      </linearGradient>
      <linearGradient id="recess" gradientUnits="userSpaceOnUse" x1="450" x2="640" y1="0" y2="0">
        <stop offset="0" stopColor="#74788d" />
        <stop offset=".1" stopColor="#7c8096" />
        <stop offset=".11" stopColor="#8088a4" />
        <stop offset=".4" stopColor="#939cbd" />
        <stop offset=".75" stopColor="#8f96b4" />
        <stop offset=".92" stopColor="#7c8197" />
        <stop offset="1" stopColor="#5f6373" />
      </linearGradient>
      <linearGradient id="base" gradientUnits="userSpaceOnUse" x1="428" x2="640" y1="0" y2="0">
        <stop offset="0" stopColor="#888a98" />
        <stop offset=".45" stopColor="#9194a6" />
        <stop offset="1" stopColor="#787b8c" />
      </linearGradient>
      <radialGradient id="dockShade">
        <stop offset="0" stopColor="#e6e6e6" />
        <stop offset=".4" stopColor="#f3f3f3" />
        <stop offset="1" stopColor="#fff" />
      </radialGradient>
      <clipPath id="topFace">
        <path d={topFace} />
      </clipPath>
    </defs>

    <path d="M456 236 707 317 708 564 458 483z" fill="#f4f7fe" />
    <path d="M366 491 548 452 800 533 617 572z" fill="#f3f7fe" />
    <path d="M458 472 548 452 708 504V564L458 483z" fill="#ecf1fd" />
    <path d="M441 279 624 241 626 300 443 527z" fill="#f1f4fa" />

    <path d="M427 293V497A106 27 0 0 0 640 497L639 404 613 380 450 300z" fill="url(#wall)" />
    <ellipse cx="534" cy="496" rx="106" ry="27" fill="url(#base)" opacity=".5" />
    <path d="M443 300V517L458 514V305z" fill="#b9bfe0" opacity=".1" />
    <path d="M450 351 613 400 635 396Q639 400 639 405Q630 425 595 430 520 440 450 424z" fill="url(#recess)" />
    <path d="M427 293V497M639 404 640 497" stroke="#55565c" />
    <ellipse cx="534" cy="496" rx="106" ry="27.5" fill="none" stroke="#7b7876" strokeWidth="1.5" />

    <path d={topFace} fill="#c9ceed" />
    <g clipPath="url(#topFace)">
      <path d="M533 255 707 317V343L696 344 533 292z" fill="#bfc8ef" opacity=".8" />
      <path d="M441 279 624 241V272L440 311z" fill="#b5bde0" opacity=".6" />
      <path d="M456 236 533 261V292L458 308z" fill="#b9c4ef" opacity=".35" />
    </g>
    <path d="M450 310 613 362V403L450 351z" fill="#9094a9" />
    <path d="M613 362 779 327V368L613 403z" fill="#818599" />
    <path d="M427 293C428 280 470 264 533 264Q575 264 608 272L779 327V368L613 403 555 384V344M427 293Q428 303 450 310L613 362 779 327M613 362V403M450 310V351" fill="none" stroke="#2a2a30" />
    <path d="M555 384 450 351V424Q520 440 595 430 630 425 639 405 639 401 636 398" fill="none" stroke="#3b88b5" strokeWidth="1.2" />

    <path d="M533 292 696 344V386L533 333M638 305V366M533 406 600 428" fill="none" stroke="#82807f" strokeWidth="1.5" />
    <path d="M637 304h2v2h-2z" fill="#777" />

    <path d="M456 236 707 317 708.5 564 458 483zM366 491 548 452 800 533 617 572z" fill="none" stroke="#5a86f0" strokeWidth="1.2" />
    <path d="M441 279 624 241 626 488 443.5 527z" fill="none" stroke="#24407f" strokeWidth="1.3" />
    <path d="M457 472 708 552M445 515 626 477M532.5 261V291M534.5 497V508" fill="none" stroke="#222" strokeWidth="1.2" strokeDasharray="2 2" />
    <path d="M532.5 292 534.5 496" stroke="#000" strokeWidth="1.8" />
    <path d="M531 290h3v3h-3z" />
    <path d="M534.5 496V480M534.5 496 530 497" stroke="#f00" strokeWidth="1.5" />
    <path d="M534.5 473 537 480h-5zM525 498 531 495.500 532 499z" fill="#f01010" />

    <PlaneName transform="translate(455 250) rotate(16)" fill="#7598ec">Right Plane</PlaneName>
    <PlaneName transform="translate(541 272) rotate(-11)" fill="#2c4680">Front Plane</PlaneName>
    <PlaneName $light transform="translate(725 550) rotate(-12)" fill="#a0b9f4">Top Plane</PlaneName>

    <path d="M170 678V662" stroke="#8de68d" strokeWidth="2.5" />
    <path d="M170 658 173 664h-6z" fill="#0a5c14" />
    <path d="M170 678 160 675" stroke="#1212a8" strokeWidth="2.5" />
    <path d="M157 673 163 673.500 161 678z" fill="#1212a8" />
    <path d="M170 679 158 682" stroke="#b80e0e" strokeWidth="2.5" />
    <path d="M152 683 159 679 160 684z" fill="#c40c0c" />
    <circle cx="170" cy="678" r="1.8" fill="#123c12" />
    <AxisName x="169" y="654" fill="#6cba6c">Y</AxisName>
    <AxisName x="153" y="673" fill="#5656d8">Z</AxisName>
    <AxisName x="149" y="683" fill="#ee6a6a">X</AxisName>

    <ellipse cx="350" cy="715" rx="88" ry="6" fill="url(#dockShade)" />
  </Scene>
);

export default function App() {
  return (
    <Window>
      <GlobalStyle />
      <TitleBar>
        <Brand>
          <Logo viewBox="0 0 15 16" fill="none" stroke="#d8261c" aria-hidden="true">
            <path d="M3 1q5-.5 4.500 1.500T3 6" strokeWidth="1.2" />
            <path d="M4 6 .8 14Q6 12.500 7 9.500T3.500 7.500" strokeWidth="1.2" />
            <path d="M14.500 4.200q-4.500-1-5.500.8t2 3.300q2 2-.5 4t-4 .8" strokeWidth="1.4" />
          </Logo>
          <Wordmark $bold>SOLID</Wordmark>
          <Wordmark>WORKS</Wordmark>
          <MenuBar>
            {menus.map((m) => <MenuButton key={m}>{m}</MenuButton>)}
          </MenuBar>
          <Icon name="pin" size={10} />
        </Brand>
        <QuickBar>
          <QuickHome aria-label="主页"><Icon name="home" /></QuickHome>
          {quickTools.map(([icon, label]) => (
            <React.Fragment key={icon}>
              <ToolButton aria-label={label}><Icon name={icon} size={15} /></ToolButton>
              <DropButton $width={14} aria-label={`${label}选项`}><Caret $soft={icon === 'redo'} /></DropButton>
            </React.Fragment>
          ))}
          <SelectTool>
            <SelectButton aria-label="选择"><Icon name="cursor" /></SelectButton>
            <DropButton $width={8} aria-label="选择选项"><Caret /></DropButton>
          </SelectTool>
          <QuickGroup>
            <ToolButton aria-label="重建模型"><Icon name="traffic" /></ToolButton>
            <ToolButton aria-label="文件属性"><Icon name="options" /></ToolButton>
            <ToolButton aria-label="选项"><Icon name="gear" /></ToolButton>
          </QuickGroup>
          <DropButton $width={14} aria-label="更多选项"><Caret /></DropButton>
        </QuickBar>
        <DocumentTitle>草图4 ← P9 *</DocumentTitle>
        <SearchBox>
          <Icon name="command" size={10} />
          <SearchInput placeholder="搜索命令" aria-label="搜索命令" />
        </SearchBox>
      </TitleBar>

      <Ribbon>
        <ExitSketch $width={21} $active>
          <Icon name="exitSketch" />
          <RibbonLabel>{'退出\n草图'}</RibbonLabel>
          <RibbonDrop><Caret /></RibbonDrop>
        </ExitSketch>
        <CommandButton icon="dimension" label={'智能\n尺寸'} width={23} drop rule />
        <SketchGrid>
          {sketchTools.map(([icon, drop]) => (
            <SketchCell key={icon}>
              <ToolButton aria-label={icon}><Icon name={icon} /></ToolButton>
              {drop && <DropButton $width={8} aria-label={`${icon} options`}><Caret /></DropButton>}
            </SketchCell>
          ))}
        </SketchGrid>
        {editCommands.map((c) => <CommandButton key={c.icon} {...c} />)}
        <CommandStack>
          <StackRow><Icon name="mirror" />镜向实体</StackRow>
          <StackRow><Icon name="pattern" />线性草图阵列<Caret /></StackRow>
          <StackRow><Icon name="move" />移动实体<Caret /></StackRow>
        </CommandStack>
        {viewCommands.map((c) => <CommandButton key={c.icon} {...c} />)}
      </Ribbon>

      <TabRow>
        <CommandTabs role="tablist">
          {tabs.map((t) => (
            <CommandTab key={t} role="tab" aria-selected={t === '草图'} $active={t === '草图'} $wide={t.length > 2}>{t}</CommandTab>
          ))}
        </CommandTabs>
        <ViewBar>
          {viewTools.map(([icon, drop]) => (
            <React.Fragment key={icon}>
              <ToolButton aria-label={icon}><Icon name={icon} /></ToolButton>
              {drop && <DropButton $width={6} aria-label={`${icon} options`}><Caret $soft /></DropButton>}
            </React.Fragment>
          ))}
        </ViewBar>
        <WindowBar>
          {['dockLeft', 'dockRight', 'minimize', 'restore', 'close'].map((icon) => (
            <ToolButton key={icon} aria-label={icon}><Icon name={icon} size={12} /></ToolButton>
          ))}
        </WindowBar>
      </TabRow>

      <Workspace>
        <Sidebar>
          <GripBar><Knob /></GripBar>
          <PanelTabs role="tablist">
            {['part', 'list', 'config', 'target', 'sphere'].map((icon) => (
              <PanelTab key={icon} role="tab" aria-label={icon} aria-selected={icon === 'part'} $active={icon === 'part'} $cut={icon === 'sphere'}>
                <Icon name={icon} />
              </PanelTab>
            ))}
            <PanelArrow aria-label="向左滚动">
              <ArrowGlyph $size={6} viewBox="0 0 6 6" aria-hidden="true">
                <path d="M5 0v6L1 3z" fill="#111" />
              </ArrowGlyph>
            </PanelArrow>
            <PanelArrow $grow aria-label="更多">
              <ArrowGlyph $size={10} viewBox="0 0 10 10" fill="none" aria-hidden="true">
                <path d="M3 1l4 4-4 4" stroke="#222" strokeWidth="1.6" />
              </ArrowGlyph>
            </PanelArrow>
          </PanelTabs>
          <FilterBox>
            <Icon name="funnel" />
            <FilterInput aria-label="过滤" />
          </FilterBox>
          <Tree>
            {nodes.map((n) => (
              <TreeRow key={n.text} $level={n.level ?? 1} $off={n.off} $bar={n.bar}>
                {(n.level ?? 1) === 1 && (
                  n.fold ? (
                    <Twisty aria-label="展开">
                      <ArrowGlyph $size={5} viewBox="0 0 6 6" aria-hidden="true">
                        <path d={n.fold === 'open' ? 'M0 1h6L3 5z' : 'M1 0v6l4-3z'} fill="#555" />
                      </ArrowGlyph>
                    </Twisty>
                  ) : <Twisty as="span" />
                )}
                <Icon name={n.icon} />
                {n.text}
              </TreeRow>
            ))}
          </Tree>
          <Handle aria-label="折叠面板"><Knob /></Handle>
        </Sidebar>
        <Viewport>
          <Model />
          <TaskPane>
            {['home', 'library', 'explorer', 'palette', 'sphere', 'list', 'forum'].map((icon) => (
              <TaskButton key={icon} aria-label={icon} $active={icon === 'sphere'}><Icon name={icon} /></TaskButton>
            ))}
          </TaskPane>
        </Viewport>
      </Workspace>
    </Window>
  );
}
